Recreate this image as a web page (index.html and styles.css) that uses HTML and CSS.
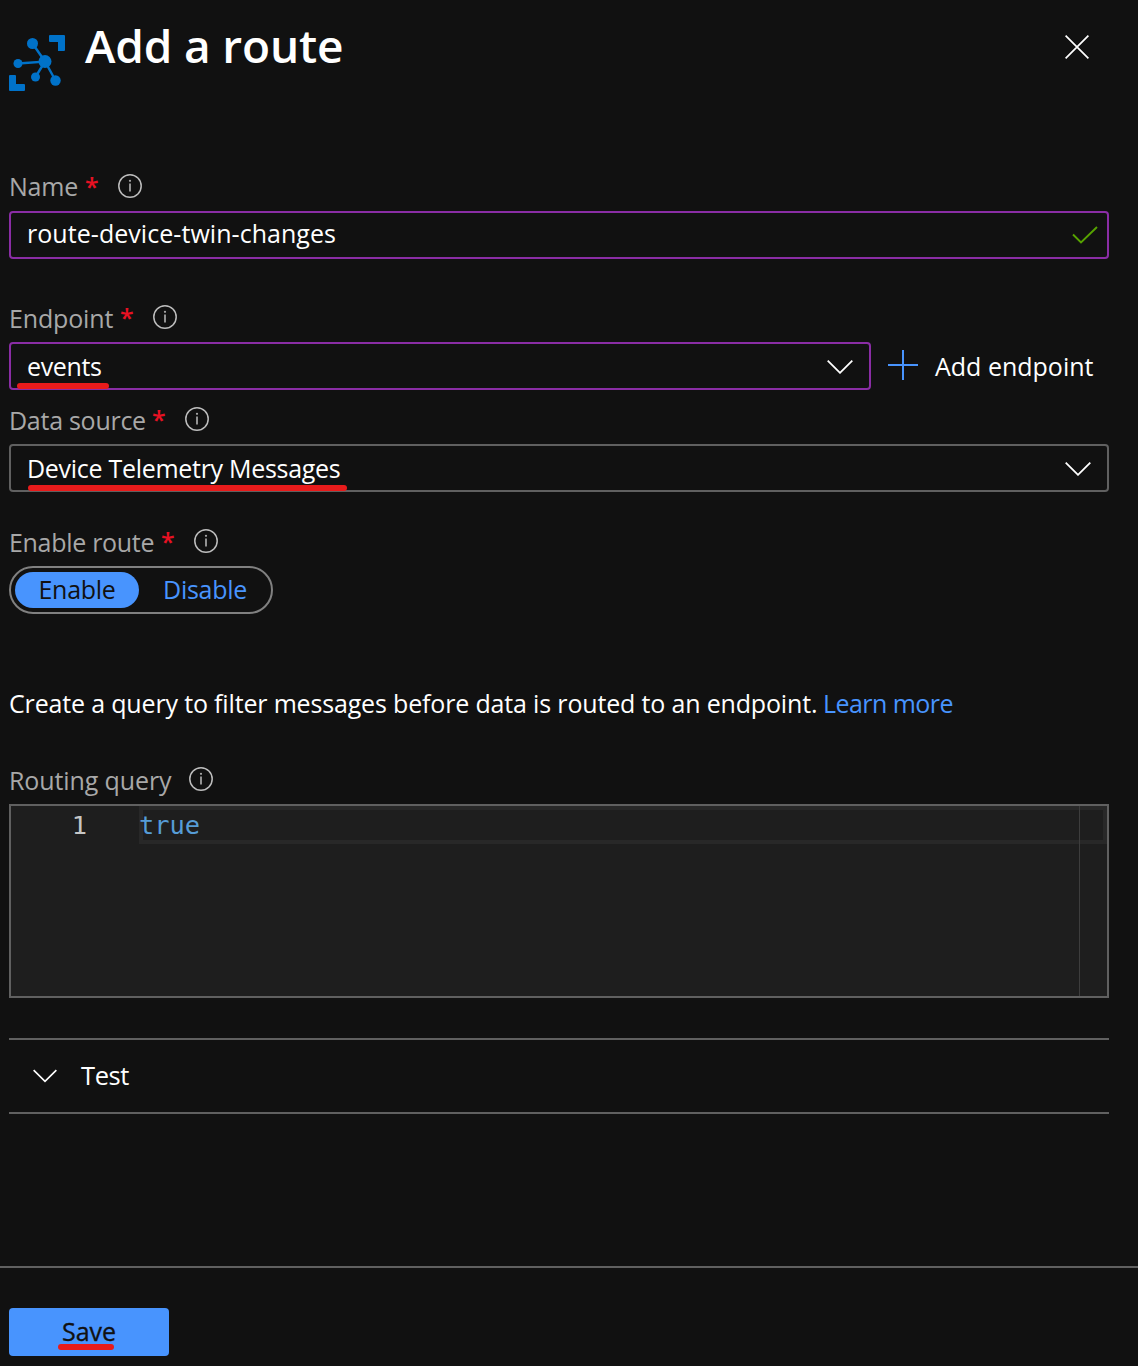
FILE: index.html
```html
<!DOCTYPE html>
<html lang="en">
<head>
<meta charset="utf-8">
<title>Add a route</title>
<link rel="stylesheet" href="styles.css">
</head>
<body>
<svg class="defs" width="0" height="0">
  <symbol id="info" viewBox="0 0 24 24"><circle cx="12" cy="12" r="11.2" fill="none" stroke="#bdbdbd" stroke-width="1.5"/><path d="M12 9.5v8" stroke="#aaa" stroke-width="1.7"/><circle cx="12" cy="6.8" r="1.1" fill="#aaa"/></symbol>
  <symbol id="chevron" viewBox="0 0 26 14"><path d="M.7.7 13 12.8 25.3.7" fill="none" stroke="#fff" stroke-width="1.8"/></symbol>
</svg>
<main class="panel">
  <header class="header">
    <svg class="logo" width="56" height="56" viewBox="0 0 56 56" fill="#0072c9">
      <path d="M41 0h14q1 0 1 1v14q0 1-1 1h-6V7h-8q-1 0-1-1V1q0-1 1-1ZM1 40h5q1 0 1 1v8h8q1 0 1 1v5q0 1-1 1H1q-1 0-1-1V41q0-1 1-1Z"/>
      <path d="M23.500 8.500 36 26.500 46.500 45.500M9 28.500 36 26.500 26.500 42" fill="none" stroke="#0072c9" stroke-width="2.400"/>
      <circle cx="23.500" cy="8.500" r="5.500"/><circle cx="36" cy="26.500" r="6.500"/><circle cx="9" cy="28.500" r="4.500"/><circle cx="26.500" cy="42" r="4.500"/><circle cx="46.500" cy="45.500" r="5.200"/>
    </svg>
    <h1 class="title">Add a route</h1>
    <svg class="close" width="24" height="24" viewBox="0 0 24 24"><path d="m.6.6 22.800 22.800m0-22.800L.6 23.400" stroke="#fff" stroke-width="1.700"/></svg>
  </header>

  <section class="field name-field">
    <div class="label"><span class="label-text name-label">Name</span><span class="required">*</span><svg class="info"><use href="#info"/></svg></div>
    <div class="input changed raised"><span class="name-value">route-device-twin-changes</span><svg class="check" width="26" height="18" viewBox="0 0 26 18"><path d="m1 8.500 8 8L25 1" fill="none" stroke="#57a300" stroke-width="1.900"/></svg></div>
  </section>

  <section class="field endpoint-field">
    <div class="label"><span class="label-text endpoint-label">Endpoint</span><span class="required">*</span><svg class="info"><use href="#info"/></svg></div>
    <div class="endpoint-row">
      <div class="input changed select"><span class="marked mark-events">events</span><svg class="chevron"><use href="#chevron"/></svg></div>
      <div class="add"><svg width="30" height="30" viewBox="0 0 30 30"><path d="M15 0v30M0 15h30" stroke="#4894fe" stroke-width="2"/></svg><span class="add-text">Add endpoint</span></div>
    </div>
  </section>

  <section class="field source-field">
    <div class="label"><span class="label-text source-label">Data source</span><span class="required">*</span><svg class="info"><use href="#info"/></svg></div>
    <div class="input select"><span class="marked mark-source">Device Telemetry Messages</span><svg class="chevron"><use href="#chevron"/></svg></div>
  </section>

  <section class="field enable-field">
    <div class="label"><span class="label-text enable-label">Enable route</span><span class="required">*</span><svg class="info"><use href="#info"/></svg></div>
    <div class="toggle"><span class="option on">Enable</span><span class="option">Disable</span></div>
  </section>

  <p class="hint"><span class="hint-text">Create a query to filter messages before data is routed to an endpoint.</span><span class="link">Learn more</span></p>

  <section class="field query-field">
    <div class="label"><span class="label-text query-label">Routing query</span><svg class="info"><use href="#info"/></svg></div>
    <div class="editor"><span class="line-number">1</span><code class="line">true</code><span class="ruler"></span></div>
  </section>

  <section class="accordion"><svg class="chevron small"><use href="#chevron"/></svg><span class="test">Test</span></section>
</main>
<footer class="footer"><div class="save"><span class="marked mark-save">Save</span></div></footer>
</body>
</html>
```
FILE: styles.css
```css
* { box-sizing: border-box; }
body {
  margin: 0;
  height: 1366px;
  display: flex;
  flex-direction: column;
  overflow: hidden;
  background: #111;
  color: #fff;
  font: 25px/34px "Open Sans", "Noto Sans", sans-serif;
  white-space: nowrap;
}
svg { display: block; flex: none; }
.defs { position: absolute; }
.panel { flex: 1; padding: 0 29px 0 9px; }
.header { display: flex; height: 170px; }
.logo { margin-top: 35px; }
.title { margin: 13px auto 0 20px; font-size: 46px; line-height: 64px; font-weight: 600; letter-spacing: -.15px; }
.close { margin: 35px 20px 0 0; }

.field { display: flex; flex-direction: column; gap: 9px; }
.label { display: flex; height: 32px; align-items: center; color: #a8a8a8; }
.label-text { padding-top: 2px; }
.name-label { width: 76px; letter-spacing: -.2px; }
.name-field .label-text { padding-top: 0; }
.endpoint-label { width: 111px; letter-spacing: -.15px; }
.source-label { width: 143px; letter-spacing: -.27px; }
.enable-label { width: 152px; letter-spacing: -.3px; }
.enable-field .label-text { padding-top: 1px; }
.query-label { width: 180px; letter-spacing: -.1px; }
.required { width: 33px; padding-bottom: 1px; color: #e81123; font-weight: 600; }
.info { width: 24px; height: 24px; }
.input {
  display: flex;
  align-items: center;
  justify-content: space-between;
  height: 48px;
  padding: 0 10px 0 16px;
  border: 2px solid #606060;
  border-radius: 4px;
}
.changed { border-color: #8a2da5; }
.raised { padding: 0 9px 4px 16px; }
.name-value { letter-spacing: .05px; }
.check { margin-top: 4px; }
.select { padding-right: 16px; }
.select .chevron { margin-top: 2px; }
.chevron { width: 26px; height: 14px; }
.endpoint-field { margin-top: 42px; }
.endpoint-row { display: flex; }
.endpoint-row .input { width: 862px; }
.add { display: flex; align-items: center; gap: 17px; margin-left: 17px; height: 46px; }
.add-text { padding-top: 1px; }
.source-field { margin-top: 13px; }
.enable-field { margin-top: 33px; }

.marked { position: relative; }
.marked::after { content: ""; position: absolute; height: 6px; border-radius: 3px; background: #e81b1b; }
.mark-events { letter-spacing: -.35px; }
.mark-events::after { left: -10px; width: 92px; top: 34px; }
.mark-source { letter-spacing: -.29px; }
.mark-source::after { left: 1px; width: 319px; top: 34px; }
.mark-save { top: -1px; -webkit-text-stroke: .35px #111; }
.mark-save::after { left: -4px; width: 56px; top: 30px; }

.toggle { display: flex; align-items: center; width: 264px; height: 48px; padding: 0 4px; border: 2px solid #808080; border-radius: 24px; }
.option { width: 124px; height: 36px; border-radius: 18px; text-align: center; line-height: 35px; letter-spacing: -.3px; color: #4894fe; }
.on { background: #4894fe; color: #111; }
.option + .option { margin-left: 4px; }

.hint { display: flex; margin: 72px 0 43px; }
.hint-text { width: 814px; letter-spacing: -.165px; }
.link { letter-spacing: -.55px; color: #4894fe; }
.editor { position: relative; display: flex; height: 194px; border: 2px solid #606060; background: #1e1e1e; font: 25.4px/39px "DejaVu Sans Mono", monospace; }
.line-number { width: 128px; padding-right: 52px; text-align: right; color: #c6c6c6; }
.line { flex: 1; height: 38px; border: 4px solid #282828; font: inherit; line-height: 31px; color: #569cd6; text-indent: -4px; }
.ruler { position: absolute; top: 0; bottom: 0; right: 27px; width: 1px; background: #3d3d3d; }
.accordion { display: flex; align-items: center; margin-top: 40px; height: 76px; padding-left: 24px; gap: 24px; border: solid #606060; border-width: 2px 0; }
.test { padding-bottom: 3px; font-size: 25.500px; letter-spacing: -.4px; }
.small { width: 24px; height: 14px; }
.footer { height: 100px; padding: 40px 9px 0; border-top: 2px solid #606060; }
.save { display: flex; align-items: center; justify-content: center; width: 160px; height: 48px; border-radius: 4px; background: #4894fe; color: #111; }
```
